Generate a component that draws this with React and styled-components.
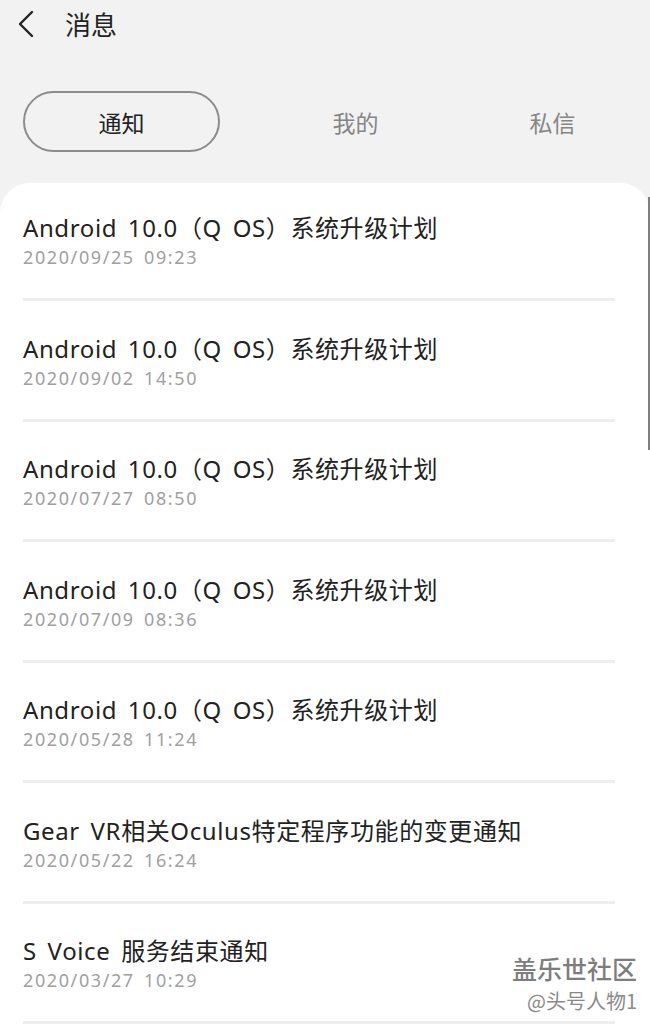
import React from "react";
import styled, { createGlobalStyle } from "styled-components";

const Global = createGlobalStyle`
  html, body { margin: 0; padding: 0; background: #f2f2f2; }
  body { font-family: "Noto Sans", "Noto Sans CJK SC", sans-serif; overflow: hidden; }
  * { box-sizing: border-box; }
`;

const Page = styled.div`
  width: 650px;
  height: 1030px;
  background: #f2f2f2;
  position: relative;
  overflow: hidden;
`;

const Header = styled.div`
  height: 50px;
  display: flex;
  align-items: center;
  padding-left: 14px;
  gap: 27px;
`;

const BackBtn = styled.div`
  width: 24px;
  height: 30px;
  display: flex;
  align-items: center;
  justify-content: center;
  margin-top: -2px;
`;

const Title = styled.div`
  font-family: "Noto Sans CJK SC", sans-serif;
  font-size: 26px;
  color: #222;
  line-height: 1;
  margin-top: -2px;
`;

const Tabs = styled.div`
  display: grid;
  grid-template-columns: 234px 197px 197px;
  padding-left: 23px;
  margin-top: 41px;
  height: 61px;
`;

const Tab = styled.div`
  width: 197px;
  height: 61px;
  display: flex;
  align-items: center;
  justify-content: center;
  border-radius: 31px;
  border: 2px solid ${(p) => (p.$active ? "#8c8c8c" : "transparent")};
  font-family: "Noto Sans CJK SC", sans-serif;
  font-size: 23px;
  color: ${(p) => (p.$active ? "#222" : "#858585")};
`;

const Card = styled.div`
  margin-top: 31px;
  background: #fff;
  border-radius: 30px 30px 0 0;
  padding: 0 35px 0 23px;
  height: 900px;
  position: relative;
`;

const List = styled.div`
  display: flex;
  flex-direction: column;
`;

const Item = styled.div`
  padding-top: 32.5px;
  padding-bottom: 27px;
  border-bottom: 3px solid #eeeeee;
  &:first-child { padding-top: 30px; }
`;

const ItemTitle = styled.div`
  font-size: 24px;
  line-height: 30px;
  color: #222;
  white-space: nowrap;
  word-spacing: 4px;
  letter-spacing: 0.6px;
`;

const ItemDate = styled.div`
  font-size: 18px;
  line-height: 28px;
  color: #a0a0a0;
  word-spacing: 3px;
  letter-spacing: 1.6px;
`;

const ScrollBar = styled.div`
  position: absolute;
  right: 0;
  top: 14px;
  width: 2px;
  height: 253px;
  background: #7f7f7f;
`;

const Watermark = styled.div`
  position: absolute;
  right: 13px;
  bottom: 17px;
  display: flex;
  flex-direction: column;
  align-items: flex-end;
  gap: 8px;
  font-family: "Noto Sans CJK SC", sans-serif;
  color: #8a8a8a;
  text-shadow: 0 0 2px #fff, 1px 1px 1px #fff;
`;

const WmTitle = styled.div`
  font-size: 25px;
  line-height: 26px;
  font-weight: 500;
  color: #7d7d7d;
`;

const WmUser = styled.div`
  font-size: 20px;
  line-height: 24px;
`;

const items = [
  ["Android 10.0（Q OS）系统升级计划", "2020/09/25 09:23"],
  ["Android 10.0（Q OS）系统升级计划", "2020/09/02 14:50"],
  ["Android 10.0（Q OS）系统升级计划", "2020/07/27 08:50"],
  ["Android 10.0（Q OS）系统升级计划", "2020/07/09 08:36"],
  ["Android 10.0（Q OS）系统升级计划", "2020/05/28 11:24"],
  ["Gear VR相关Oculus特定程序功能的变更通知", "2020/05/22 16:24"],
  ["S Voice 服务结束通知", "2020/03/27 10:29"],
];

export default function App() {
  return (
    <Page>
      <Global />
      <Header>
        <BackBtn>
          <svg width="18" height="28" viewBox="0 0 18 28">
            <path d="M15 2 L3 14 L15 26" fill="none" stroke="#222" strokeWidth="2.4" strokeLinecap="round" strokeLinejoin="round" />
          </svg>
        </BackBtn>
        <Title>消息</Title>
      </Header>
      <Tabs>
        <Tab $active>通知</Tab>
        <Tab>我的</Tab>
        <Tab>私信</Tab>
      </Tabs>
      <Card>
        <List>
          {items.map(([t, d], i) => (
            <Item key={i}>
              <ItemTitle>{t}</ItemTitle>
              <ItemDate>{d}</ItemDate>
            </Item>
          ))}
        </List>
        <ScrollBar />
      </Card>
      <Watermark>
        <WmTitle>盖乐世社区</WmTitle>
        <WmUser>@头号人物1</WmUser>
      </Watermark>
    </Page>
  );
}
